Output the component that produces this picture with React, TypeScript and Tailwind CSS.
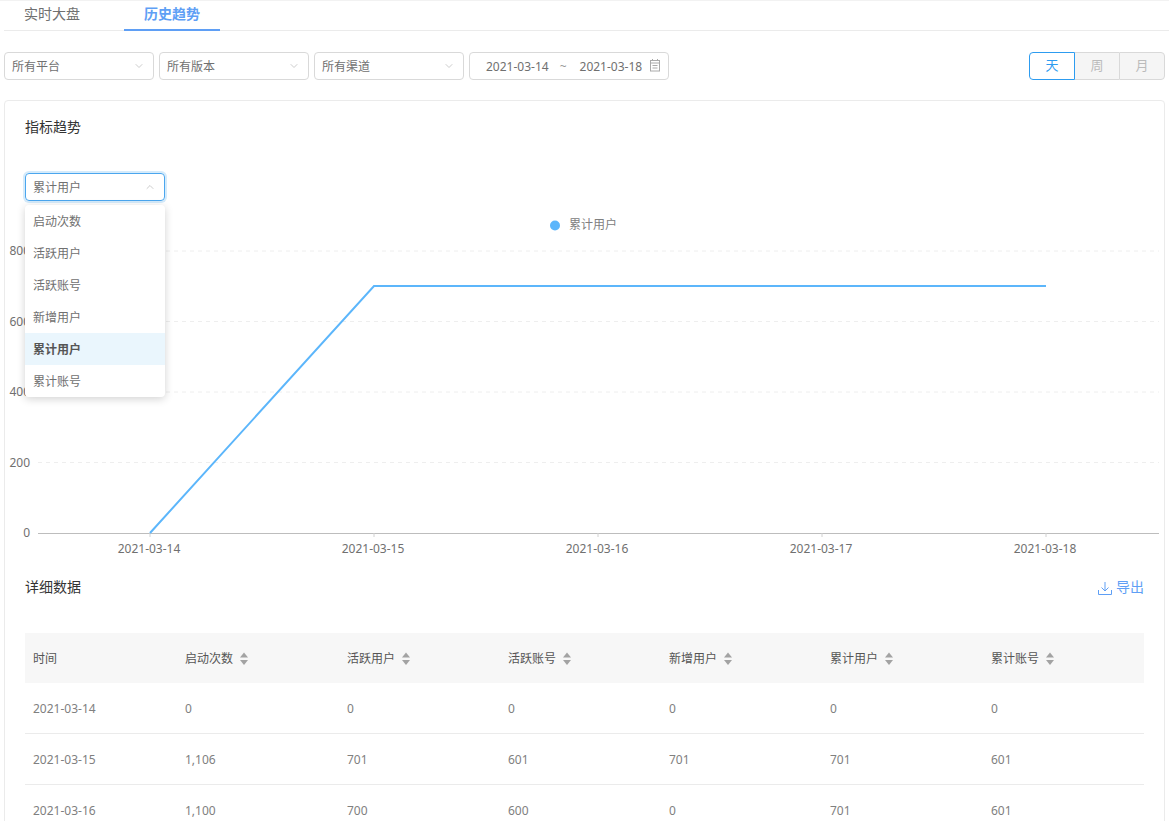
import { ChevronDown, ChevronUp } from "lucide-react";

const font = { fontFamily: '"Noto Sans", "Noto Sans CJK SC", sans-serif' };

const columns = ["启动次数", "活跃用户", "活跃账号", "新增用户", "累计用户", "累计账号"];

const rows = [
  ["2021-03-14", "0", "0", "0", "0", "0", "0"],
  ["2021-03-15", "1,106", "701", "601", "701", "701", "601"],
  ["2021-03-16", "1,100", "700", "600", "0", "701", "601"],
];

const options = ["启动次数", "活跃用户", "活跃账号", "新增用户", "累计用户", "累计账号"];

const gridLines = [
  { y: 251, label: "800" },
  { y: 321.5, label: "600" },
  { y: 392, label: "400" },
  { y: 462.5, label: "200" },
];

const ticks = [
  { x: 150, label: "2021-03-14" },
  { x: 374, label: "2021-03-15" },
  { x: 598, label: "2021-03-16" },
  { x: 822, label: "2021-03-17" },
  { x: 1046, label: "2021-03-18" },
];

function FilterSelect({ label }: { label: string }) {
  return (
    <div className="w-[150px] h-7 border border-[#d9d9d9] rounded flex items-center justify-between pl-[7px] pr-2 text-xs text-[#707070]">
      <span className="pt-0.5">{label}</span>
      <ChevronDown className="h-3 w-3 text-[#bbb]" strokeWidth={1.5} />
    </div>
  );
}

function SortIcon() {
  return (
    <svg width="10" height="14" viewBox="0 0 10 14" className="ml-[6px]">
      <path d="M5 0.5 L9 5.5 H1 Z" fill="#a3a3a3" />
      <path d="M1 8 H9 L5 13 Z" fill="#a3a3a3" />
    </svg>
  );
}

function TrendChart() {
  return (
    <svg width="1159" height="355" viewBox="5 205 1159 355" className="block -ml-5" style={font}>
      {gridLines.map((g) => (
        <g key={g.label}>
          <line x1="38" x2="1159" y1={g.y} y2={g.y} stroke="#eeeeee" strokeDasharray="4 4" />
          <text x="30" y={g.y + 4} textAnchor="end" fontSize="12" fill="#707070">
            {g.label}
          </text>
        </g>
      ))}
      <text x="30" y="537" textAnchor="end" fontSize="12" fill="#707070">
        0
      </text>
      <line x1="38" x2="1159" y1="533.5" y2="533.5" stroke="#bdbdbd" />
      {ticks.map((t) => (
        <g key={t.x}>
          <line x1={t.x} x2={t.x} y1="533" y2="537" stroke="#d0d0d0" />
          <text x={t.x - 1} y="553" textAnchor="middle" fontSize="12" fill="#707070">
            {t.label}
          </text>
        </g>
      ))}
      <polyline points="150,533 374,286 1046,286" fill="none" stroke="#5cb6fb" strokeWidth="2" />
      <circle cx="555" cy="225.5" r="5" fill="#5cb6fb" />
      <text x="569" y="229" fontSize="12" fill="#808080">
        累计用户
      </text>
    </svg>
  );
}

export default function App() {
  return (
    <div className="w-[1169px] h-[821px] overflow-hidden bg-white border-t border-[#f2f2f2]" style={font}>
      {/* Tabs */}
      <div className="ml-1 h-[30px] border-b border-[#ebebeb] flex gap-6">
        <div className="w-24 h-[30px] text-center text-sm leading-[26px] text-[#707070]">实时大盘</div>
        <div className="w-24 h-[30px] text-center text-sm leading-[26px] font-bold text-[#5f9ff5] border-b-2 border-[#5f9ff5]">
          历史趋势
        </div>
      </div>

      {/* Filters */}
      <div className="mt-[21px] px-1 flex items-center justify-between">
        <div className="flex gap-[5px]">
          <FilterSelect label="所有平台" />
          <FilterSelect label="所有版本" />
          <FilterSelect label="所有渠道" />
          <div className="w-[200px] h-7 border border-[#d9d9d9] rounded flex items-center pl-4 text-xs text-[#707070]">
            <span className="pt-0.5">2021-03-14</span>
            <span className="ml-[11px] pt-0.5 text-[#999]">~</span>
            <span className="ml-[13px] pt-0.5">2021-03-18</span>
            <svg width="12" height="13" viewBox="0 0 12 13" className="ml-[7px] mb-0.5" fill="none" stroke="#aaa">
              <rect x="1.5" y="1.5" width="9" height="10.5" />
              <path d="M1.5 4 H10.5 M3.5 6.5 H8.5 M3.5 9 H8.5 M3.5 0 V2 M8.5 0 V2" />
            </svg>
          </div>
        </div>
        <div className="flex h-7 text-[13px]">
          <div className="w-[46px] border border-[#2d9cf0] rounded-l flex items-center justify-center text-[#2d9cf0]">天</div>
          <div className="w-[44px] border-y border-[#d9d9d9] bg-[#f5f5f5] flex items-center justify-center text-[#bbb]">周</div>
          <div className="w-[46px] border border-[#d9d9d9] rounded-r bg-[#f5f5f5] flex items-center justify-center text-[#bbb]">月</div>
        </div>
      </div>

      {/* Card */}
      <div className="mt-5 mx-1 border border-[#ebebeb] rounded-sm px-5 pb-5">
        <div className="mt-4 h-5 text-sm leading-5 text-[#333]">指标趋势</div>

        <div className="relative mt-[36px] w-[140px] h-7 z-10">
          <div className="h-7 border border-[#4ba6ee] rounded flex items-center justify-between pl-[7px] pr-2 text-xs text-[#707070] shadow-[0_0_0_2px_#d5ebfb]">
            <span className="pt-0.5">累计用户</span>
            <ChevronUp className="h-3 w-3 text-[#bbb]" strokeWidth={1.5} />
          </div>
          <div className="absolute left-0 top-8 w-[140px] bg-white rounded shadow-[0_2px_8px_rgba(0,0,0,0.18)] overflow-hidden">
            {options.map((o, i) => (
              <div
                key={o}
                className={
                  i === 4
                    ? "h-8 pl-2 pt-0.5 flex items-center text-xs font-bold text-[#555] bg-[#eaf6fd]"
                    : "h-8 pl-2 pt-0.5 flex items-center text-xs text-[#707070]"
                }
              >
                {o}
              </div>
            ))}
          </div>
        </div>

        <div className="mt-1">
          <TrendChart />
        </div>

        {/* Detail table */}
        <div className="mt-[15px] h-6 flex items-center justify-between">
          <span className="text-sm text-[#333]">详细数据</span>
          <span className="flex items-center text-sm text-[#5f9ff5]">
            <svg width="14" height="14" viewBox="0 0 14 14" fill="none" stroke="#5f9ff5" className="mr-1 mt-0.5">
              <path d="M7 1 V10 M3.5 6.5 L7 10 L10.5 6.5 M0.5 9 V13.5 H13.5 V9" />
            </svg>
            导出
          </span>
        </div>

        <table className="mt-[34px] w-[1119px] table-fixed text-xs">
          <colgroup>
            <col className="w-[160px]" />
            <col className="w-[162px]" />
            <col className="w-[161px]" />
            <col className="w-[161px]" />
            <col className="w-[161px]" />
            <col className="w-[161px]" />
            <col />
          </colgroup>
          <thead>
            <tr className="h-[50px] bg-[#f7f7f7] text-[#555]">
              <th className="pl-2 pt-0.5 text-left font-normal">时间</th>
              {columns.map((c) => (
                <th key={c} className="pt-0.5 text-left font-normal">
                  <span className="flex items-center">
                    {c}
                    <SortIcon />
                  </span>
                </th>
              ))}
            </tr>
          </thead>
          <tbody>
            {rows.map((r, rowIdx) => (
              <tr
                key={r[0]}
                className={
                  rowIdx === 0
                    ? "h-[50px] border-b border-[#ebebeb] text-[#808080]"
                    : "h-[51px] border-b border-[#ebebeb] text-[#808080]"
                }
              >
                {r.map((v, i) => (
                  <td key={i} className={i === 0 ? "pl-2 pt-0.5" : "pt-0.5"}>
                    {v}
                  </td>
                ))}
              </tr>
            ))}
          </tbody>
        </table>
      </div>
    </div>
  );
}
